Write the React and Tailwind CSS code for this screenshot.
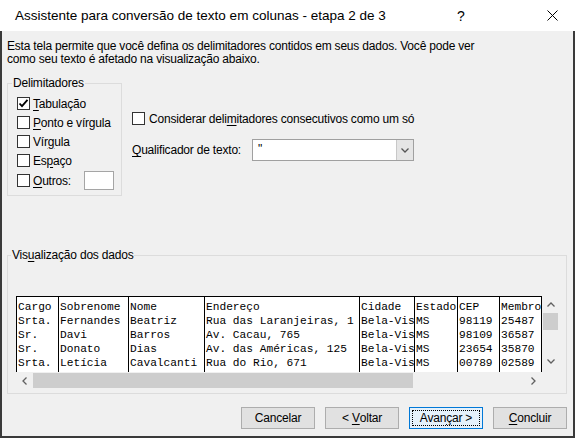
import React from "react";

function Box({ checked }) {
  return (
    <span className="w-[13px] h-[13px] border border-[#333333] bg-white flex items-center justify-center shrink-0">
      {checked && (
        <svg width="11" height="11" viewBox="0 0 11 11">
          <path d="M1.5 5.5 L4 8.2 L9.5 1.8" stroke="#000" strokeWidth="1.8" fill="none" />
        </svg>
      )}
    </span>
  );
}

function U({ children }) {
  return <span className="underline underline-offset-[2px]">{children}</span>;
}

const cols = [
  { w: "w-[42px]", rows: ["Cargo", "Srta.", "Sr.", "Sr.", "Srta."] },
  { w: "w-[70px]", rows: ["Sobrenome", "Fernandes", "Davi", "Donato", "Letícia"] },
  { w: "w-[76px]", rows: ["Nome", "Beatriz", "Barros", "Dias", "Cavalcanti"] },
  { w: "w-[155px]", rows: ["Endereço", "Rua das Laranjeiras, 1", "Av. Cacau, 765", "Av. das Américas, 125", "Rua do Rio, 671"] },
  { w: "w-[55px]", rows: ["Cidade", "Bela-Vista", "Bela-Vista", "Bela-Vista", "Bela-Vista"] },
  { w: "w-[43px]", rows: ["Estado", "MS", "MS", "MS", "MS"] },
  { w: "w-[42px]", rows: ["CEP", "98119", "98109", "23654", "00789"] },
  { w: "w-[42px]", rows: ["Membro", "25487", "36587", "35870", "02589"] },
];

function Btn({ children, focused }) {
  if (focused) {
    return (
      <div className="w-[74px] h-[22px] border border-[#0078d7] bg-[#e5f1fb] p-[2px] flex">
        <div className="flex-1 border border-dotted border-black flex items-center justify-center whitespace-pre">{children}</div>
      </div>
    );
  }
  return (
    <div className="w-[74px] h-[22px] border border-[#adadad] bg-[#e1e1e1] flex items-center justify-center whitespace-pre">{children}</div>
  );
}

export default function App() {
  return (
    <div className="w-[575px] h-[438px] flex flex-col bg-white font-['Liberation_Sans',Arial,sans-serif] text-[12px] leading-[14px] text-black">
      <div className="h-[31px] flex items-center shrink-0">
        <div className="flex-1 pl-[15px] text-[13.5px] leading-[20px]">Assistente para conversão de texto em colunas - etapa 2 de 3</div>
        <div className="w-[46px] flex justify-center text-[14px]">?</div>
        <div className="w-[45px]" />
        <div className="w-[46px] flex justify-center">
          <svg width="11" height="11" viewBox="0 0 11 11">
            <path d="M0.5 0.5 L10.5 10.5 M10.5 0.5 L0.5 10.5" stroke="#000" strokeWidth="1" />
          </svg>
        </div>
      </div>
      <div className="flex-1 bg-[#f0f0f0] border-x-2 border-b-2 border-[#3a3a3a] flex flex-col pl-[5px] pr-[6px] tracking-[-0.2px]">
        <p className="pt-[9px] leading-[13px]">
          Esta tela permite que você defina os delimitadores contidos em seus dados. Você pode ver
          <br />
          como seu texto é afetado na visualização abaixo.
        </p>
        <div className="flex mt-[9px]">
          <fieldset className="w-[115px] border border-[#dcdcdc] pl-[9px] pt-[3px] pb-[4px]">
            <legend className="ml-[-5px] px-[1px] leading-[16px]">Delimitadores</legend>
            <div className="h-[19px] flex items-center gap-[3px]"><Box checked /><span><U>T</U>abulação</span></div>
            <div className="h-[19px] flex items-center gap-[3px]"><Box /><span><U>P</U>onto e vírgula</span></div>
            <div className="h-[19px] flex items-center gap-[3px]"><Box /><span>Vír<U>g</U>ula</span></div>
            <div className="h-[19px] flex items-center gap-[3px]"><Box /><span>Es<U>p</U>aço</span></div>
            <div className="h-[21px] flex items-center gap-[3px]">
              <Box />
              <span className="w-[48px]"><U>O</U>utros:</span>
              <span className="w-[30px] h-[19px] border border-[#a5a5a5] bg-white" />
            </div>
          </fieldset>
          <div className="ml-[10px] flex flex-col">
            <div className="mt-[34px] h-[19px] flex items-center gap-[4px]">
              <Box />
              <span className="whitespace-nowrap">Considerar deli<U>m</U>itadores consecutivos como um só</span>
            </div>
            <div className="mt-[11px] h-[22px] flex items-center">
              <span className="w-[120px] whitespace-nowrap"><U>Q</U>ualificador de texto:</span>
              <div className="w-[162px] h-[22px] border border-[#a0a0a0] bg-white flex">
                <span className="flex-1 pl-[5px] leading-[18px]">"</span>
                <span className="w-[17px] bg-[#e5e5e5] border-l border-[#c8c8c8] flex items-center justify-center">
                  <svg width="8" height="5" viewBox="0 0 8 5">
                    <path d="M0.5 0.5 L4 4 L7.5 0.5" stroke="#555" strokeWidth="1.3" fill="none" />
                  </svg>
                </span>
              </div>
            </div>
          </div>
        </div>
        <fieldset className="mt-[51px] border border-[#dcdcdc] pl-[8px] pr-[7px] pt-[33px] pb-[4px]">
          <legend className="ml-[-5px] px-[1px] leading-[16px]">Vis<U>u</U>alização dos dados</legend>
          <div className="flex items-start">
            <div className="w-[526px] h-[76px] border-t border-r border-black bg-white flex overflow-hidden font-['Liberation_Mono',monospace] text-[11.2px] leading-[14px] tracking-normal">
              {cols.map((c, i) => (
                <div key={i} className={`${c.w} shrink-0 h-full border-l border-black pt-[3px] pl-[1px] overflow-hidden whitespace-nowrap`}>
                  {c.rows.map((r, j) => (
                    <div key={j} className="h-[14px]">{r}</div>
                  ))}
                </div>
              ))}
            </div>
            <div className="w-[17px] h-[74px] flex flex-col">
              <div className="h-[17px] flex items-center justify-center">
                <svg width="8" height="5" viewBox="0 0 8 5">
                  <path d="M0.5 4.5 L4 1 L7.5 4.5" stroke="#606060" strokeWidth="1.3" fill="none" />
                </svg>
              </div>
              <div className="h-[17px] mx-[1px] bg-[#cdcdcd]" />
              <div className="flex-1" />
              <div className="h-[17px] flex items-center justify-center">
                <svg width="8" height="5" viewBox="0 0 8 5">
                  <path d="M0.5 0.5 L4 4 L7.5 0.5" stroke="#606060" strokeWidth="1.3" fill="none" />
                </svg>
              </div>
            </div>
          </div>
          <div className="w-[526px] h-[17px] flex">
            <div className="w-[17px] flex items-center justify-center">
              <svg width="5" height="8" viewBox="0 0 5 8">
                <path d="M4.5 0.5 L1 4 L4.5 7.5" stroke="#606060" strokeWidth="1.3" fill="none" />
              </svg>
            </div>
            <div className="flex-1 py-[1px]">
              <div className="w-[380px] h-full bg-[#cdcdcd]" />
            </div>
            <div className="w-[17px] flex items-center justify-center">
              <svg width="5" height="8" viewBox="0 0 5 8">
                <path d="M0.5 0.5 L4 4 L0.5 7.5" stroke="#606060" strokeWidth="1.3" fill="none" />
              </svg>
            </div>
          </div>
        </fieldset>
        <div className="mt-[13px] flex justify-end gap-[10px]">
          <Btn>Cancelar</Btn>
          <Btn>{"< "}<U>V</U>oltar</Btn>
          <Btn focused>Avan<U>ç</U>ar{" >"}</Btn>
          <Btn><U>C</U>oncluir</Btn>
        </div>
      </div>
    </div>
  );
}
